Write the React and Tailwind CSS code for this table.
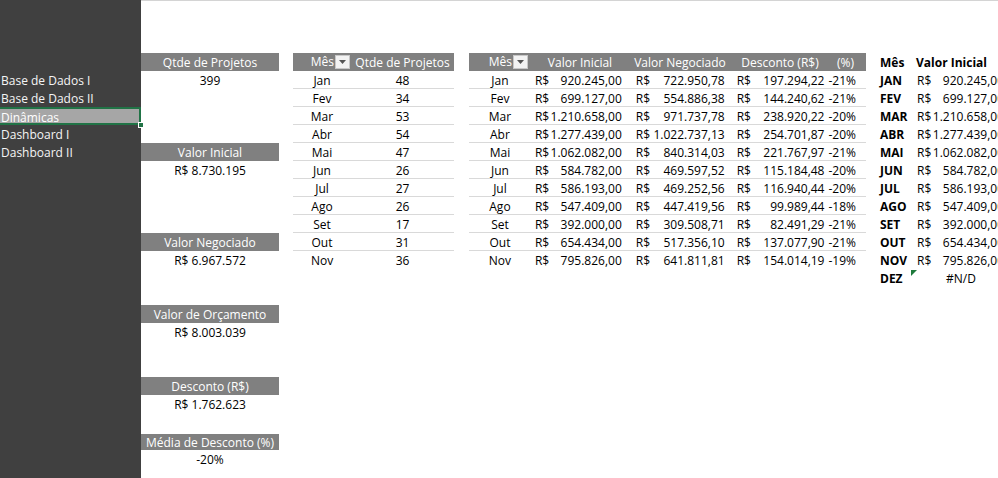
import React from "react";

const months = ["Jan","Fev","Mar","Abr","Mai","Jun","Jul","Ago","Set","Out","Nov"];
const qtde = [48,34,53,54,47,26,27,26,17,31,36];
const vi = ["920.245,00","699.127,00","1.210.658,00","1.277.439,00","1.062.082,00","584.782,00","586.193,00","547.409,00","392.000,00","654.434,00","795.826,00"];
const vn = ["722.950,78","554.886,38","971.737,78","1.022.737,13","840.314,03","469.597,52","469.252,56","447.419,56","309.508,71","517.356,10","641.811,81"];
const ds = ["197.294,22","144.240,62","238.920,22","254.701,87","221.767,97","115.184,48","116.940,44","99.989,44","82.491,29","137.077,90","154.014,19"];
const pc = ["-21%","-21%","-20%","-20%","-21%","-20%","-20%","-18%","-21%","-21%","-19%"];

function Drop() {
  return (
    <div className="w-[15px] h-[14px] bg-[#f3f3f3] border border-[#c8c8c8] flex items-center justify-center">
      <svg width="7" height="4" viewBox="0 0 7 4"><path d="M0 0h7L3.5 4z" fill="#555" /></svg>
    </div>
  );
}

function Money({ v, cls }) {
  return (
    <div className={"flex justify-between " + cls}>
      <span>R$</span>
      <span>{v}</span>
    </div>
  );
}

function SumBlock({ title, value, mt, hh = "h-[18px] leading-[20px]" }) {
  return (
    <div className={mt}>
      <div className={"bg-[#808080] text-white text-center " + hh}>{title}</div>
      <div className="h-[18px] leading-[20px] text-center">{value}</div>
    </div>
  );
}

export default function App() {
  const side = ["Base de Dados I", "Base de Dados II", "Dinâmicas", "Dashboard I", "Dashboard II"];
  return (
    <div className="w-[998px] h-[478px] overflow-hidden bg-white flex font-['Open_Sans',sans-serif] text-[12px] text-black">
      <div className="w-[141px] shrink-0 bg-[#404040] pt-[71px] text-[#f5f5f5]">
        {side.map((s) =>
          s === "Dinâmicas" ? (
            <div key={s} className="relative h-[18px] leading-[17px] bg-[#a6a6a6] text-white border-y-2 border-r-2 border-[#217346] pl-[1px] w-[141px]">
              {s}
              <div className="absolute right-[-5px] bottom-[-5px] w-[6px] h-[6px] bg-[#217346] border border-white" />
            </div>
          ) : (
            <div key={s} className="h-[18px] leading-[20px] pl-[1px]">{s}</div>
          )
        )}
      </div>
      <div className="flex-1 border-t border-[#d4d4d4] flex pt-[52px]">
        <div className="w-[138px] shrink-0">
          <SumBlock title="Qtde de Projetos" value="399" />
          <SumBlock title="Valor Inicial" value="R$ 8.730.195" mt="mt-[54px]" />
          <SumBlock title="Valor Negociado" value="R$ 6.967.572" mt="mt-[54px]" />
          <SumBlock title="Valor de Orçamento" value="R$ 8.003.039" mt="mt-[36px]" />
          <SumBlock title="Desconto (R$)" value="R$ 1.762.623" mt="mt-[36px]" />
          <SumBlock title="Média de Desconto (%)" value="-20%" mt="mt-[21px]" hh="h-[16px] leading-[17px]" />
        </div>

        <div className="w-[161px] shrink-0 ml-[14px]">
          <div className="flex h-[18px] bg-[#808080] text-white leading-[20px]">
            <div className="w-[58px] flex items-center justify-end pr-[1px] gap-[1px]">
              <span>Mês</span>
              <Drop />
            </div>
            <div className="flex-1 text-center">Qtde de Projetos</div>
          </div>
          {months.map((m, i) => (
            <div key={m} className={"flex h-[18px] leading-[19px] " + (i < 10 ? "border-b border-[#d9d9d9]" : "")}>
              <div className="w-[58px] text-center">{m}</div>
              <div className="flex-1 text-center">{qtde[i]}</div>
            </div>
          ))}
        </div>

        <div className="w-[397px] shrink-0 ml-[15px]">
          <div className="flex h-[18px] bg-[#808080] text-white leading-[20px]">
            <div className="w-[62px] flex items-center justify-end pr-[3px] gap-[1px]">
              <span>Mês</span>
              <Drop />
            </div>
            <div className="w-[98px] text-center">Valor Inicial</div>
            <div className="w-[102px] text-center">Valor Negociado</div>
            <div className="w-[98px] text-center">Desconto (R$)</div>
            <div className="flex-1 text-right pr-[12px]">(%)</div>
          </div>
          {months.map((m, i) => (
            <div key={m} className={"flex h-[18px] leading-[19px] " + (i < 10 ? "border-b border-[#d9d9d9]" : "")}>
              <div className="w-[62px] text-center">{m}</div>
              <Money v={vi[i]} cls="w-[98px] pl-[4px] pr-[7px]" />
              <Money v={vn[i]} cls="w-[102px] pl-[7px] pr-[6px]" />
              <Money v={ds[i]} cls="w-[98px] pl-[6px] pr-[4px]" />
              <div className="flex-1 text-right pr-[10px]">{pc[i]}</div>
            </div>
          ))}
        </div>

        <div className="w-[140px] shrink-0 ml-[10px] font-bold">
          <div className="flex h-[18px] leading-[20px]">
            <div className="w-[37px] pl-[4px]">Mês</div>
            <div className="pl-[3px]">Valor Inicial</div>
          </div>
          {months.map((m, i) => (
            <div key={m} className="flex h-[18px] leading-[20px]">
              <div className="w-[37px] pl-[4px]">{m.toUpperCase()}</div>
              <Money v={vi[i]} cls="w-[98px] pl-[4px] pr-[7px] font-normal" />
            </div>
          ))}
          <div className="flex h-[18px] leading-[20px]">
            <div className="w-[37px] pl-[4px]">DEZ</div>
            <div className="relative w-[98px] pl-[33px] font-normal">
              <svg className="absolute left-[-2px] top-[1px]" width="6" height="6" viewBox="0 0 6 6"><path d="M0 0h6L0 6z" fill="#1e7a3c" /></svg>
              #N/D
            </div>
          </div>
        </div>
      </div>
    </div>
  );
}
